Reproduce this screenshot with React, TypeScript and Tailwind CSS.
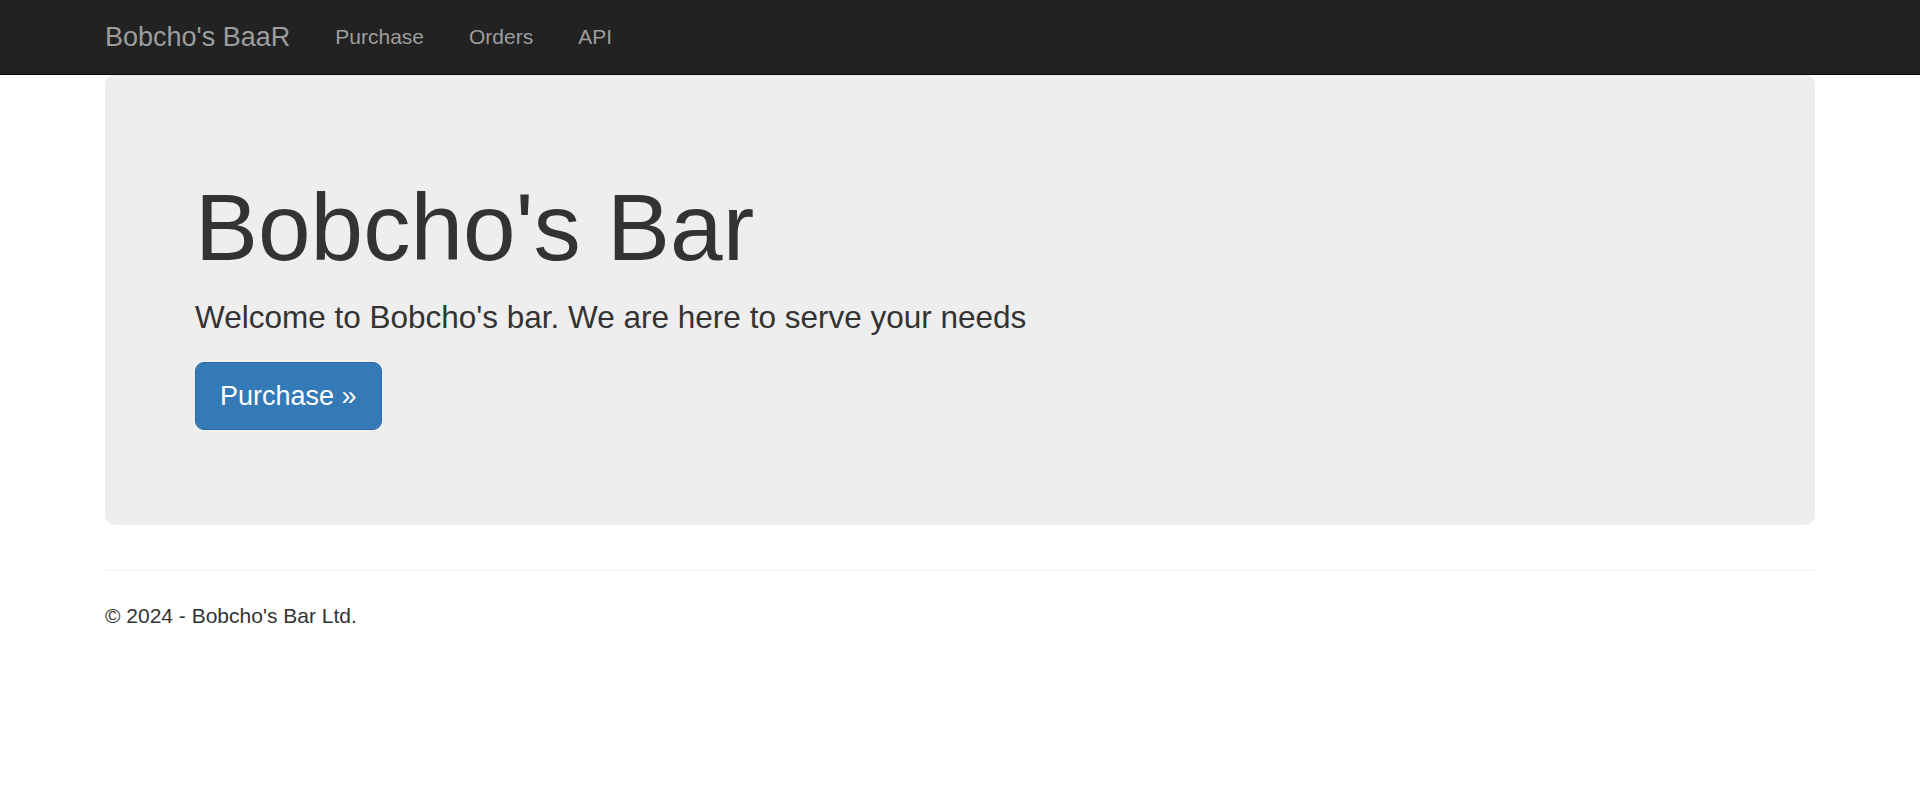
export default function App() {
  const font = { fontFamily: '"Liberation Sans", Arial, Helvetica, sans-serif' };
  return (
    <div className="bg-white text-[#333]" style={font}>
      <nav className="h-[74px] bg-[#222] border-b border-[#080808] box-content">
        <div className="mx-auto flex w-[1710px] items-start">
          <a className="ml-[-22.5px] block px-[22.5px] py-[22px] text-[27px] leading-[30px] text-[#9d9d9d]">Bobcho's BaaR</a>
          <ul className="flex">
            {['Purchase', 'Orders', 'API'].map((t) => (
              <li key={t}>
                <a className="block px-[22.5px] py-[22px] text-[21px] leading-[30px] text-[#9d9d9d]">{t}</a>
              </li>
            ))}
          </ul>
        </div>
      </nav>
      <div className="mx-auto w-[1710px]">
        <div className="rounded-[9px] bg-[#eee] px-[90px] pt-[72px] pb-[72px]">
          <h1 className="mt-[29px] mb-[15px] text-[94.5px] leading-[1.1] font-normal">Bobcho's Bar</h1>
          <p className="mb-[22.5px] text-[31.5px] leading-[45px]">Welcome to Bobcho's bar. We are here to serve your needs</p>
          <p className="mb-[22.5px]">
            <a className="inline-block rounded-[9px] border border-[#2e6da4] bg-[#337ab7] px-[24px] py-[15px] text-[27px] leading-[36px] text-white">Purchase &raquo;</a>
          </p>
        </div>
        <hr className="mt-[45px] mb-[30px] border-0 border-t border-[#eee]" />
        <footer>
          <p className="text-[21px] leading-[30px]">&copy; 2024 - Bobcho's Bar Ltd.</p>
        </footer>
      </div>
    </div>
  );
}
